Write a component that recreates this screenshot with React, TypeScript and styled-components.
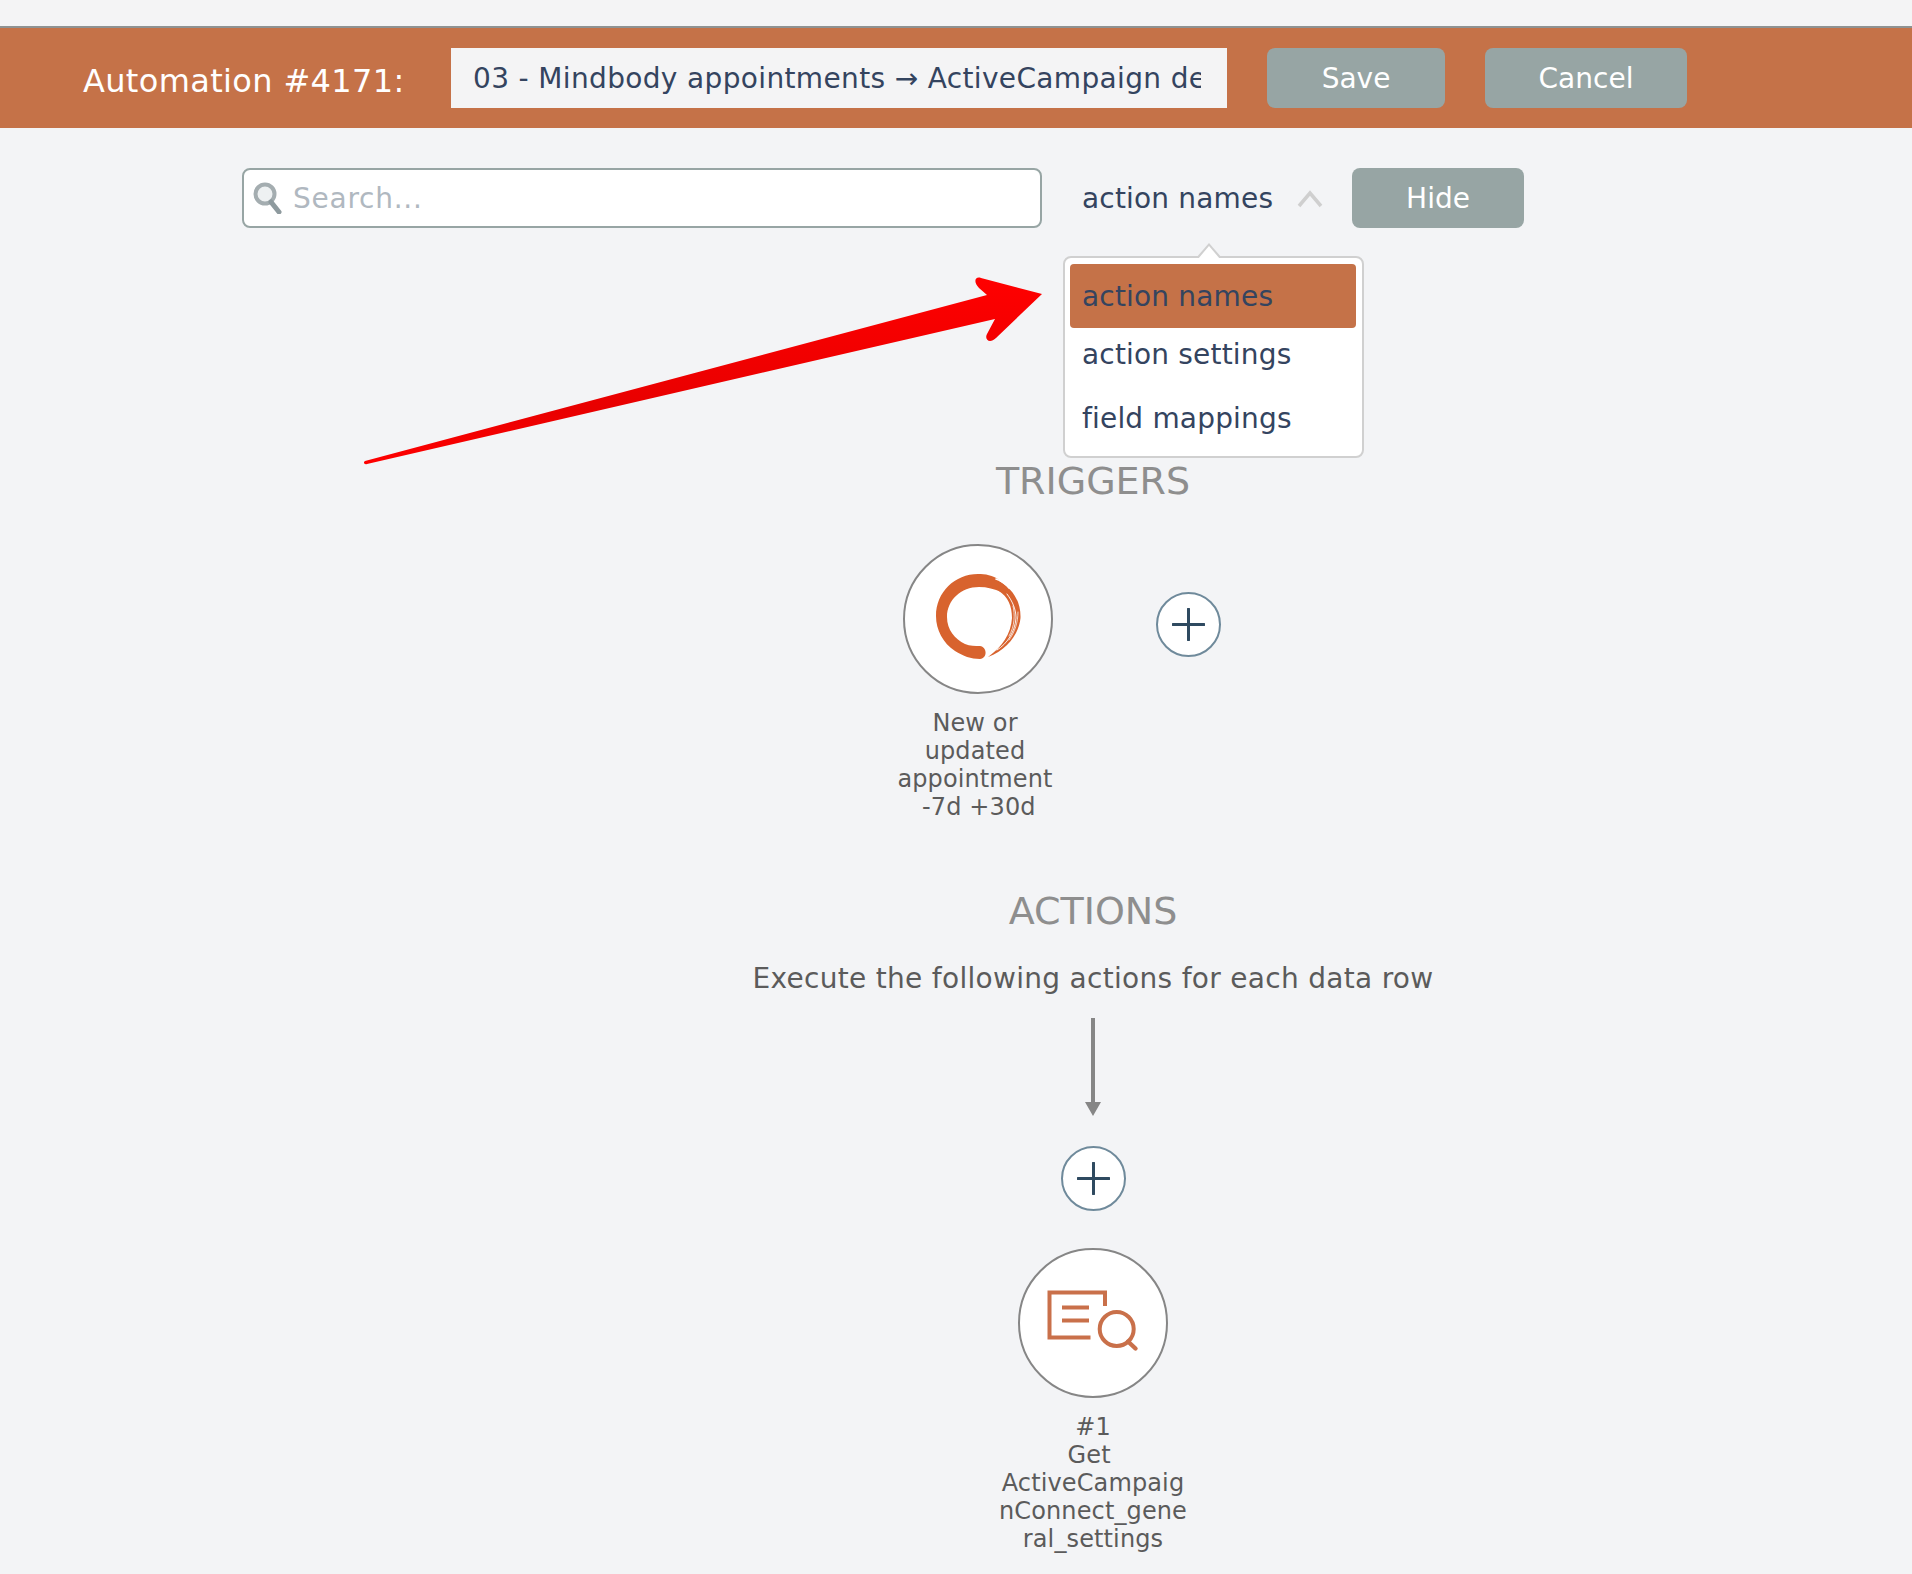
import React from "react";
import styled, { createGlobalStyle } from "styled-components";

const GlobalStyle = createGlobalStyle`
  html, body {
    margin: 0;
    padding: 0;
    background: #f3f4f6;
    font-family: "DejaVu Sans", Verdana, sans-serif;
  }
`;

const Page = styled.div`
  position: relative;
  width: 1912px;
  height: 1574px;
  overflow: hidden;
`;

const TopStrip = styled.div`
  height: 26px;
  background: #f4f4f5;
  border-bottom: 2px solid #8f9292;
`;

const Header = styled.header`
  display: flex;
  align-items: center;
  height: 100px;
  padding-left: 83px;
  background: #c57248;
`;

const Title = styled.h1`
  width: 368px;
  margin: 6px 0 0;
  font-size: 32px;
  font-weight: 400;
  letter-spacing: 0.35px;
  color: #fff;
`;

const NameInput = styled.input`
  box-sizing: border-box;
  width: 776px;
  height: 60px;
  padding: 0 26px 0 22px;
  border: 0;
  background: #f4f4f5;
  font: 400 28px "DejaVu Sans", Verdana, sans-serif;
  letter-spacing: 0.35px;
  color: #34445f;
  outline: none;
`;

const GrayButton = styled.button<{ $width: number; $left: number }>`
  width: ${(p) => p.$width}px;
  height: 60px;
  margin-left: ${(p) => p.$left}px;
  border: 0;
  border-radius: 8px;
  background: #97a5a4;
  font: 400 28px "DejaVu Sans", Verdana, sans-serif;
  color: #fff;
`;

const Toolbar = styled.div`
  display: flex;
  align-items: center;
  margin-top: 40px;
  padding-left: 242px;
`;

const SearchBox = styled.label`
  box-sizing: border-box;
  display: flex;
  align-items: center;
  gap: 10px;
  width: 800px;
  height: 60px;
  padding-left: 9px;
  border: 2px solid #97a5a4;
  border-radius: 8px;
  background: #fff;
`;

const SearchInput = styled.input`
  flex: 1;
  min-width: 0;
  border: 0;
  outline: none;
  padding: 0;
  background: transparent;
  font: 400 28px "DejaVu Sans", Verdana, sans-serif;
  letter-spacing: 0.75px;
  color: #34445f;
  &::placeholder {
    color: #b0b8c0;
    opacity: 1;
  }
`;

const SelectWrap = styled.div`
  position: relative;
  display: flex;
  align-items: center;
  width: 289px;
  height: 60px;
  margin-left: 21px;
  padding-left: 19px;
  box-sizing: border-box;
  font-size: 28px;
  letter-spacing: 0.18px;
  color: #34445f;
`;

const Chevron = styled.svg`
  margin-left: 24px;
  margin-top: 2px;
`;

const Menu = styled.div`
  position: absolute;
  left: 0;
  top: 88px;
  z-index: 2;
  box-sizing: border-box;
  width: 301px;
  height: 202px;
  padding: 6px 6px 6px 5px;
  border: 2px solid #d0d0d0;
  border-radius: 8px;
  background: #fff;
  &::before,
  &::after {
    content: "";
    position: absolute;
    left: 131px;
    top: -15px;
    border-left: 13px solid transparent;
    border-right: 13px solid transparent;
    border-bottom: 15px solid #d0d0d0;
  }
  &::after {
    left: 133px;
    top: -12px;
    border-left-width: 11px;
    border-right-width: 11px;
    border-bottom: 13px solid #fff;
  }
`;

const MenuItem = styled.div<{ $active?: boolean; $height: number }>`
  display: flex;
  align-items: center;
  height: ${(p) => p.$height}px;
  padding-left: 12px;
  border-radius: 4px;
  background: ${(p) => (p.$active ? "#c57248" : "transparent")};
  color: #34445f;
`;

const Content = styled.main`
  display: flex;
  flex-direction: column;
  align-items: center;
  margin-left: 272px;
  width: 1642px;
`;

const SectionTitle = styled.h2<{ $top: number }>`
  margin: ${(p) => p.$top}px 0 0;
  font-size: 38px;
  line-height: 44px;
  font-weight: 400;
  color: #8e8e8e;
`;

const Hint = styled.p`
  margin: 28px 0 0;
  font-size: 28px;
  line-height: 36px;
  letter-spacing: 0.3px;
  color: #5b5b5b;
`;

const TriggerRow = styled.div`
  display: flex;
  align-items: flex-start;
  align-self: flex-start;
  margin-top: 41px;
  margin-left: 631px;
`;

const Node = styled.div`
  display: flex;
  flex-direction: column;
  align-items: center;
  width: 150px;
`;

const NodeCircle = styled.div<{ $top?: number }>`
  box-sizing: border-box;
  flex-shrink: 0;
  width: 150px;
  height: 150px;
  margin-top: ${(p) => p.$top ?? 0}px;
  border: 2px solid #868686;
  border-radius: 50%;
  background: #fff;
  svg {
    display: block;
    margin: -2px;
  }
`;

const NodeLabel = styled.div<{ $shift: number; $width: number; $breakAll?: boolean }>`
  flex-shrink: 0;
  width: ${(p) => p.$width}px;
  margin-top: 15px;
  transform: translateX(${(p) => p.$shift}px);
  font-size: 24px;
  line-height: 28px;
  letter-spacing: 0.12px;
  text-align: center;
  word-break: ${(p) => (p.$breakAll ? "break-all" : "normal")};
  color: #5b5b5b;
`;

const AddCircle = styled.button<{ $left?: number; $top?: number }>`
  box-sizing: border-box;
  display: flex;
  align-items: center;
  justify-content: center;
  width: 65px;
  height: 65px;
  margin-left: ${(p) => p.$left ?? 0}px;
  margin-top: ${(p) => p.$top ?? 0}px;
  padding: 0;
  border: 2px solid #6f8a9b;
  border-radius: 50%;
  background: #fff;
`;

const FlowArrow = styled.svg`
  display: block;
  margin-top: 21px;
`;

const RedArrow = styled.svg`
  position: absolute;
  left: 360px;
  top: 270px;
  z-index: 3;
`;

const PlusIcon = () => (
  <svg width="33" height="33" viewBox="0 0 33 33">
    <path d="M16.5 1v31M1 16.5h31" stroke="#2f4a60" strokeWidth="3" strokeLinecap="round" fill="none" />
  </svg>
);

const MagnifierIcon = () => (
  <svg width="30" height="32" viewBox="0 0 30 32" style={{ flexShrink: 0 }}>
    <circle cx="12" cy="12" r="9.5" fill="#eef1f2" stroke="#a4adb0" strokeWidth="4" />
    <path d="M18 20l8 10" stroke="#8e9a9e" strokeWidth="5" strokeLinecap="round" />
  </svg>
);

const EnsoLogo = () => (
  <svg width="150" height="150" viewBox="0 0 150 150">
    <g fill="#d8632e">
      <path d="M77 102C84 103 85 114 77 115C68 115 60 112 52 107C40 99 33 86 33 72C33 48 52 30 75 30C82 30 90 31 96 36L98 48C92 45 84 43 76 43C58 43 44 56 44 73C44 86 52 95 62 100C67 102 72 102 77 102Z" />
      <path d="M94 36C110 44 118 58 117.5 74C116 90 104 106 85 113C99 103 108 90 109 74C109 62 105 53 96 47Z" />
    </g>
    <g fill="none" stroke="#fff" strokeLinecap="round">
      <path d="M93 35C99 37 103 40 106 44" strokeWidth="1.6" />
      <path d="M104 50C110 58 113 66 113 74C112 88 104 100 94 106" strokeWidth="0.9" />
      <path d="M110 62C112 70 112 82 106 92" strokeWidth="0.7" />
      <path d="M115 68C115 78 112 88 106 96" strokeWidth="0.7" />
    </g>
  </svg>
);

const LookupIcon = () => (
  <svg width="150" height="150" viewBox="0 0 150 150">
    <g fill="none" stroke="#c9704a" strokeWidth="4">
      <path d="M87 58V44.5H31.5V89.5H72.5" />
      <path d="M44 59.5H71M44 72.5H71" />
      <circle cx="98.7" cy="81" r="17" />
      <path d="M110 93.5L117.5 100.5" strokeWidth="4.4" strokeLinecap="round" />
    </g>
  </svg>
);

const App = () => (
  <Page>
    <GlobalStyle />
    <TopStrip />
    <Header>
      <Title>Automation #4171:</Title>
      <NameInput readOnly value="03 - Mindbody appointments → ActiveCampaign deals" />
      <GrayButton $width={178} $left={40}>Save</GrayButton>
      <GrayButton $width={202} $left={40}>Cancel</GrayButton>
    </Header>
    <Toolbar>
      <SearchBox>
        <MagnifierIcon />
        <SearchInput placeholder="Search..." />
      </SearchBox>
      <SelectWrap>
        action names
        <Chevron width="26" height="18" viewBox="0 0 26 18">
          <path d="M2 16L13 3L24 16" fill="none" stroke="#cfcfcf" strokeWidth="3.5" />
        </Chevron>
        <Menu>
          <MenuItem $active $height={64}>action names</MenuItem>
          <MenuItem $height={53}>action settings</MenuItem>
          <MenuItem $height={75}>field mappings</MenuItem>
        </Menu>
      </SelectWrap>
      <GrayButton $width={172} $left={0}>Hide</GrayButton>
    </Toolbar>
    <Content>
      <SectionTitle $top={231}>TRIGGERS</SectionTitle>
      <TriggerRow>
        <Node>
          <NodeCircle>
            <EnsoLogo />
          </NodeCircle>
          <NodeLabel $width={160} $shift={-3}>
            New or updated appointment
            <br />
            {"\u00a0"}-7d +30d
          </NodeLabel>
        </Node>
        <AddCircle $left={103} $top={48}>
          <PlusIcon />
        </AddCircle>
      </TriggerRow>
      <SectionTitle $top={68}>ACTIONS</SectionTitle>
      <Hint>Execute the following actions for each data row</Hint>
      <FlowArrow width="16" height="98" viewBox="0 0 16 98">
        <path d="M6 0h4v84h6l-8 14l-8-14h6z" fill="#868686" />
      </FlowArrow>
      <AddCircle $top={30}>
        <PlusIcon />
      </AddCircle>
      <NodeCircle $top={37}>
        <LookupIcon />
      </NodeCircle>
      <NodeLabel $width={192} $shift={0} $breakAll>
        #1
        <br />
        Get{"\u00a0"}
        <br />
        ActiveCampaignConnect_general_settings
      </NodeLabel>
    </Content>
    <RedArrow width="700" height="210" viewBox="360 270 700 210">
      <defs>
        <linearGradient id="arrowFill" x1="0" y1="0" x2="0" y2="1">
          <stop offset="0" stopColor="#ff0000" />
          <stop offset="0.7" stopColor="#e80000" />
          <stop offset="1" stopColor="#ff0000" />
        </linearGradient>
      </defs>
      <path
        d="M365 461L987 295L979 288C973 282 975 276 981 278L1042 294L996 338C990 344 984 340 987 334L995 319L367 464C364 465 363 462 365 461Z"
        fill="url(#arrowFill)"
      />
    </RedArrow>
  </Page>
);

export default App;
